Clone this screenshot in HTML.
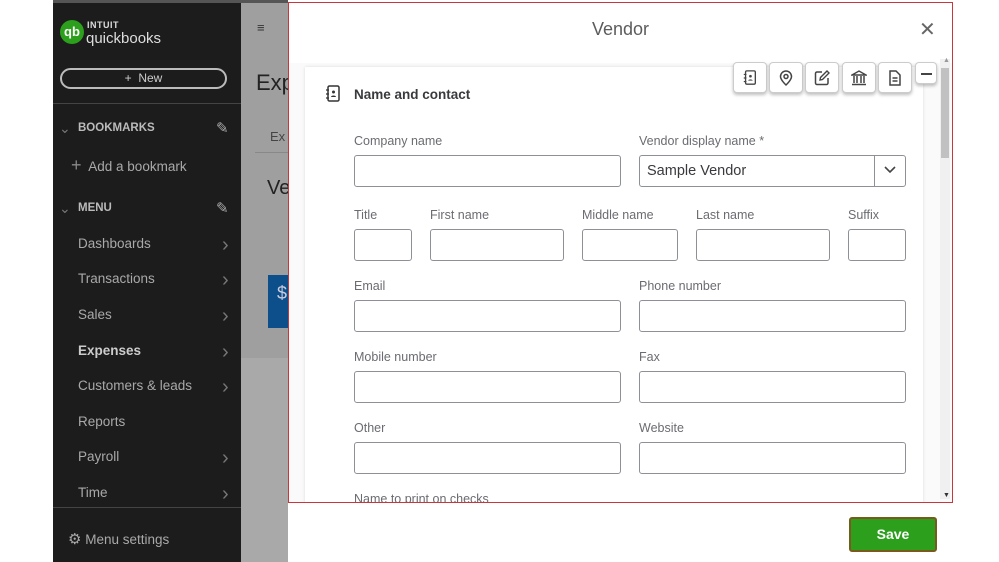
<!DOCTYPE html>
<html><head><meta charset="utf-8"><style>
*{margin:0;padding:0;box-sizing:border-box}
body{width:999px;height:562px;position:relative;background:#fff;font-family:"Liberation Sans",sans-serif;overflow:hidden}
.a{position:absolute}
.sb{left:53px;top:0;width:188px;height:562px;background:#1c1c1c;border-top:3px solid #555}
.st{color:#a9a9a9;font-size:13.5px}
.chev{color:#777;font-size:20px;line-height:16px}
.lbl{position:absolute;color:#6b6c72;font-size:12.5px}
.in{position:absolute;border:1px solid #8d9096;border-radius:3px;background:#fff}
.ib{position:absolute;top:62px;width:34px;height:31px;background:#fff;border:1px solid #ccc;border-radius:4px;box-shadow:0 2px 3px rgba(0,0,0,.25)}
.ib svg{position:absolute;left:8px;top:7px}
</style></head><body>
<div class="a sb">
  <div class="a" style="left:7px;top:17px;width:24px;height:24px;border-radius:50%;background:#2ca01c;color:#fff;font-size:13px;font-weight:bold;text-align:center;line-height:23px">qb</div>
  <div class="a" style="left:34px;top:17px;color:#ddd;font-size:9px;font-weight:bold;letter-spacing:.5px">INTUIT</div>
  <div class="a" style="left:33px;top:27px;color:#ddd;font-size:15px">quickbooks</div>
  <div class="a" style="left:7px;top:65px;width:167px;height:21px;border:2px solid #bbb;border-radius:11px;color:#ccc;font-size:12px;text-align:center;line-height:17px">+ &nbsp;New</div>
  <div class="a" style="left:0;top:100px;width:188px;height:1px;background:#444"></div>
  <div class="a" style="left:6px;top:117px;color:#777;font-size:14px">&#8964;</div>
  <div class="a" style="left:25px;top:119px;color:#bbb;font-size:11.5px;font-weight:bold">BOOKMARKS</div>
  <div class="a" style="left:163px;top:116px;color:#aaa;font-size:15px">&#9998;</div>
  <div class="a st" style="left:18px;top:152px"><span style="font-size:18px;color:#888">+</span>&nbsp; Add a bookmark</div>
  <div class="a" style="left:6px;top:197px;color:#777;font-size:14px">&#8964;</div>
  <div class="a" style="left:25px;top:199px;color:#bbb;font-size:11.5px;font-weight:bold">MENU</div>
  <div class="a" style="left:163px;top:196px;color:#aaa;font-size:15px">&#9998;</div>
  <div class="a st" style="left:25px;top:233px">Dashboards</div><div class="a chev" style="left:169px;top:234px">&#8250;</div>
  <div class="a st" style="left:25px;top:268px">Transactions</div><div class="a chev" style="left:169px;top:269px">&#8250;</div>
  <div class="a st" style="left:25px;top:304px">Sales</div><div class="a chev" style="left:169px;top:305px">&#8250;</div>
  <div class="a st" style="left:25px;top:340px;color:#ccc;font-weight:bold">Expenses</div><div class="a chev" style="left:169px;top:341px">&#8250;</div>
  <div class="a st" style="left:25px;top:375px">Customers &amp; leads</div><div class="a chev" style="left:169px;top:376px">&#8250;</div>
  <div class="a st" style="left:25px;top:411px">Reports</div>
  <div class="a st" style="left:25px;top:446px">Payroll</div><div class="a chev" style="left:169px;top:447px">&#8250;</div>
  <div class="a st" style="left:25px;top:482px">Time</div><div class="a chev" style="left:169px;top:483px">&#8250;</div>
  <div class="a" style="left:0;top:504px;width:188px;height:1px;background:#444"></div>
  <div class="a st" style="left:15px;top:527px"><span style="font-size:15px">&#9881;</span> Menu settings</div>
</div>
<div class="a" style="left:241px;top:0;width:47px;height:562px;background:#a9a9a9;border-top:3px solid #555"></div>
<div class="a" style="left:241px;top:3px;width:47px;height:355px;background:#9f9f9f"></div>
<div class="a" style="left:257px;top:20px;color:#333;font-size:13px">&#8801;</div>
<div class="a" style="left:256px;top:70px;color:#222;font-size:22px">Exp</div>
<div class="a" style="left:270px;top:129px;color:#444;font-size:13px">Ex</div>
<div class="a" style="left:255px;top:152px;width:33px;height:1px;background:#888"></div>
<div class="a" style="left:267px;top:177px;color:#222;font-size:20px">Ve</div>
<div class="a" style="left:268px;top:275px;width:20px;height:53px;background:#0d4f8a;color:#ccd;font-size:18px;padding:8px 0 0 9px">$</div>

<div class="a" style="left:288px;top:2px;width:665px;height:501px;border:1px solid #c9363b;background:#fafafa;overflow:hidden">
  <div class="a" style="left:0;top:0;width:663px;height:60px;background:#fff"></div>
  <div class="a" style="left:303px;top:16px;color:#5c5c5c;font-size:18px">Vendor</div>
  <div class="a" style="left:630px;top:14px;color:#666;font-size:20px">&#x2715;</div>
  <div class="a" style="left:16px;top:64px;width:618px;height:450px;background:#fff;box-shadow:0 0 3px rgba(0,0,0,.12)"></div>
  <div class="a" style="left:651px;top:56px;width:10px;height:440px;background:#f0f0f0"></div>
  <div class="a" style="left:652px;top:65px;width:8px;height:90px;background:#c1c1c1"></div>
  <div class="a" style="left:654px;top:489px;color:#333;font-size:7px">&#9660;</div>
  <div class="a" style="left:654px;top:54px;color:#999;font-size:7px">&#9650;</div>
</div>
<svg class="a" style="left:325px;top:85px" width="16" height="18" viewBox="0 0 16 18"><rect x="3" y="1" width="11" height="15" rx="1.5" fill="none" stroke="#333" stroke-width="1.5"/><path d="M1 5h3M1 9h3M1 13h3" stroke="#333" stroke-width="1.3"/><circle cx="8.5" cy="7" r="1.5" fill="#333"/><path d="M6 12c0-2 5-2 5 0z" fill="#333"/></svg>
<div class="a" style="left:354px;top:87px;color:#393a3d;font-size:13.5px;font-weight:bold">Name and contact</div>

<div class="lbl" style="left:354px;top:134px">Company name</div>
<div class="in" style="left:354px;top:155px;width:267px;height:32px"></div>
<div class="lbl" style="left:639px;top:134px">Vendor display name *</div>
<div class="in" style="left:639px;top:155px;width:267px;height:32px"></div>
<div class="a" style="left:647px;top:163px;color:#393a3d;font-size:14.5px">Sample Vendor</div>
<div class="a" style="left:874px;top:156px;width:1px;height:30px;background:#8d9096"></div>
<svg class="a" style="left:883px;top:165px" width="14" height="10"><path d="M2 2l5 5 5-5" fill="none" stroke="#444" stroke-width="1.6"/></svg>

<div class="lbl" style="left:354px;top:208px">Title</div><div class="in" style="left:354px;top:229px;width:58px;height:32px"></div>
<div class="lbl" style="left:430px;top:208px">First name</div><div class="in" style="left:430px;top:229px;width:134px;height:32px"></div>
<div class="lbl" style="left:582px;top:208px">Middle name</div><div class="in" style="left:582px;top:229px;width:96px;height:32px"></div>
<div class="lbl" style="left:696px;top:208px">Last name</div><div class="in" style="left:696px;top:229px;width:134px;height:32px"></div>
<div class="lbl" style="left:848px;top:208px">Suffix</div><div class="in" style="left:848px;top:229px;width:58px;height:32px"></div>

<div class="lbl" style="left:354px;top:279px">Email</div><div class="in" style="left:354px;top:300px;width:267px;height:32px"></div>
<div class="lbl" style="left:639px;top:279px">Phone number</div><div class="in" style="left:639px;top:300px;width:267px;height:32px"></div>
<div class="lbl" style="left:354px;top:350px">Mobile number</div><div class="in" style="left:354px;top:371px;width:267px;height:32px"></div>
<div class="lbl" style="left:639px;top:350px">Fax</div><div class="in" style="left:639px;top:371px;width:267px;height:32px"></div>
<div class="lbl" style="left:354px;top:421px">Other</div><div class="in" style="left:354px;top:442px;width:267px;height:32px"></div>
<div class="lbl" style="left:639px;top:421px">Website</div><div class="in" style="left:639px;top:442px;width:267px;height:32px"></div>
<div class="a" style="left:289px;top:490px;width:600px;height:12px;overflow:hidden"><div class="lbl" style="left:65px;top:2px">Name to print on checks</div></div>

<div class="ib" style="left:733px"><svg width="16" height="16" viewBox="0 0 16 18"><rect x="3" y="1" width="11" height="15" rx="1.5" fill="none" stroke="#444" stroke-width="1.5"/><path d="M1 5h3M1 9h3M1 13h3" stroke="#444" stroke-width="1.3"/><circle cx="8.5" cy="7" r="1.5" fill="#444"/><path d="M6 12c0-2 5-2 5 0z" fill="#444"/></svg></div>
<div class="ib" style="left:769px"><svg width="16" height="16" viewBox="0 0 16 16"><path d="M8 15s-5.5-5-5.5-8.5a5.5 5.5 0 0111 0C13.5 10 8 15 8 15z" fill="none" stroke="#444" stroke-width="1.5"/><circle cx="8" cy="6.5" r="2" fill="none" stroke="#444" stroke-width="1.5"/></svg></div>
<div class="ib" style="left:805px"><svg width="16" height="16" viewBox="0 0 16 16"><path d="M8 2H3a1.5 1.5 0 00-1.5 1.5v9.5A1.5 1.5 0 003 14.5h9.5A1.5 1.5 0 0014 13V8" fill="none" stroke="#444" stroke-width="1.5"/><path d="M6 10l.5-2.5L13 1l2 2-6.5 6.5z" fill="none" stroke="#444" stroke-width="1.4"/></svg></div>
<div class="ib" style="left:842px"><svg width="16" height="16" viewBox="0 0 16 16"><path d="M1 5L8 1l7 4z" fill="none" stroke="#444" stroke-width="1.4"/><path d="M3 6v7M6 6v7M10 6v7M13 6v7M1 14.5h14" stroke="#444" stroke-width="1.5"/></svg></div>
<div class="ib" style="left:878px"><svg width="16" height="16" viewBox="0 0 16 16"><path d="M3 1h6l4 4v10H3z" fill="none" stroke="#444" stroke-width="1.5"/><path d="M5.5 8h5M5.5 11h5" stroke="#444" stroke-width="1.4"/></svg></div>
<div class="a" style="left:915px;top:62px;width:22px;height:22px;background:#fff;border:1px solid #ccc;border-radius:4px;box-shadow:0 2px 3px rgba(0,0,0,.25)"><div class="a" style="left:5px;top:10px;width:11px;height:1.5px;background:#444"></div></div>

<div class="a" style="left:849px;top:517px;width:88px;height:35px;background:#2ca01c;border:2px solid #7a5a1c;border-radius:3px;color:#fff;font-weight:bold;font-size:14px;text-align:center;line-height:31px">Save</div>
</body></html>
